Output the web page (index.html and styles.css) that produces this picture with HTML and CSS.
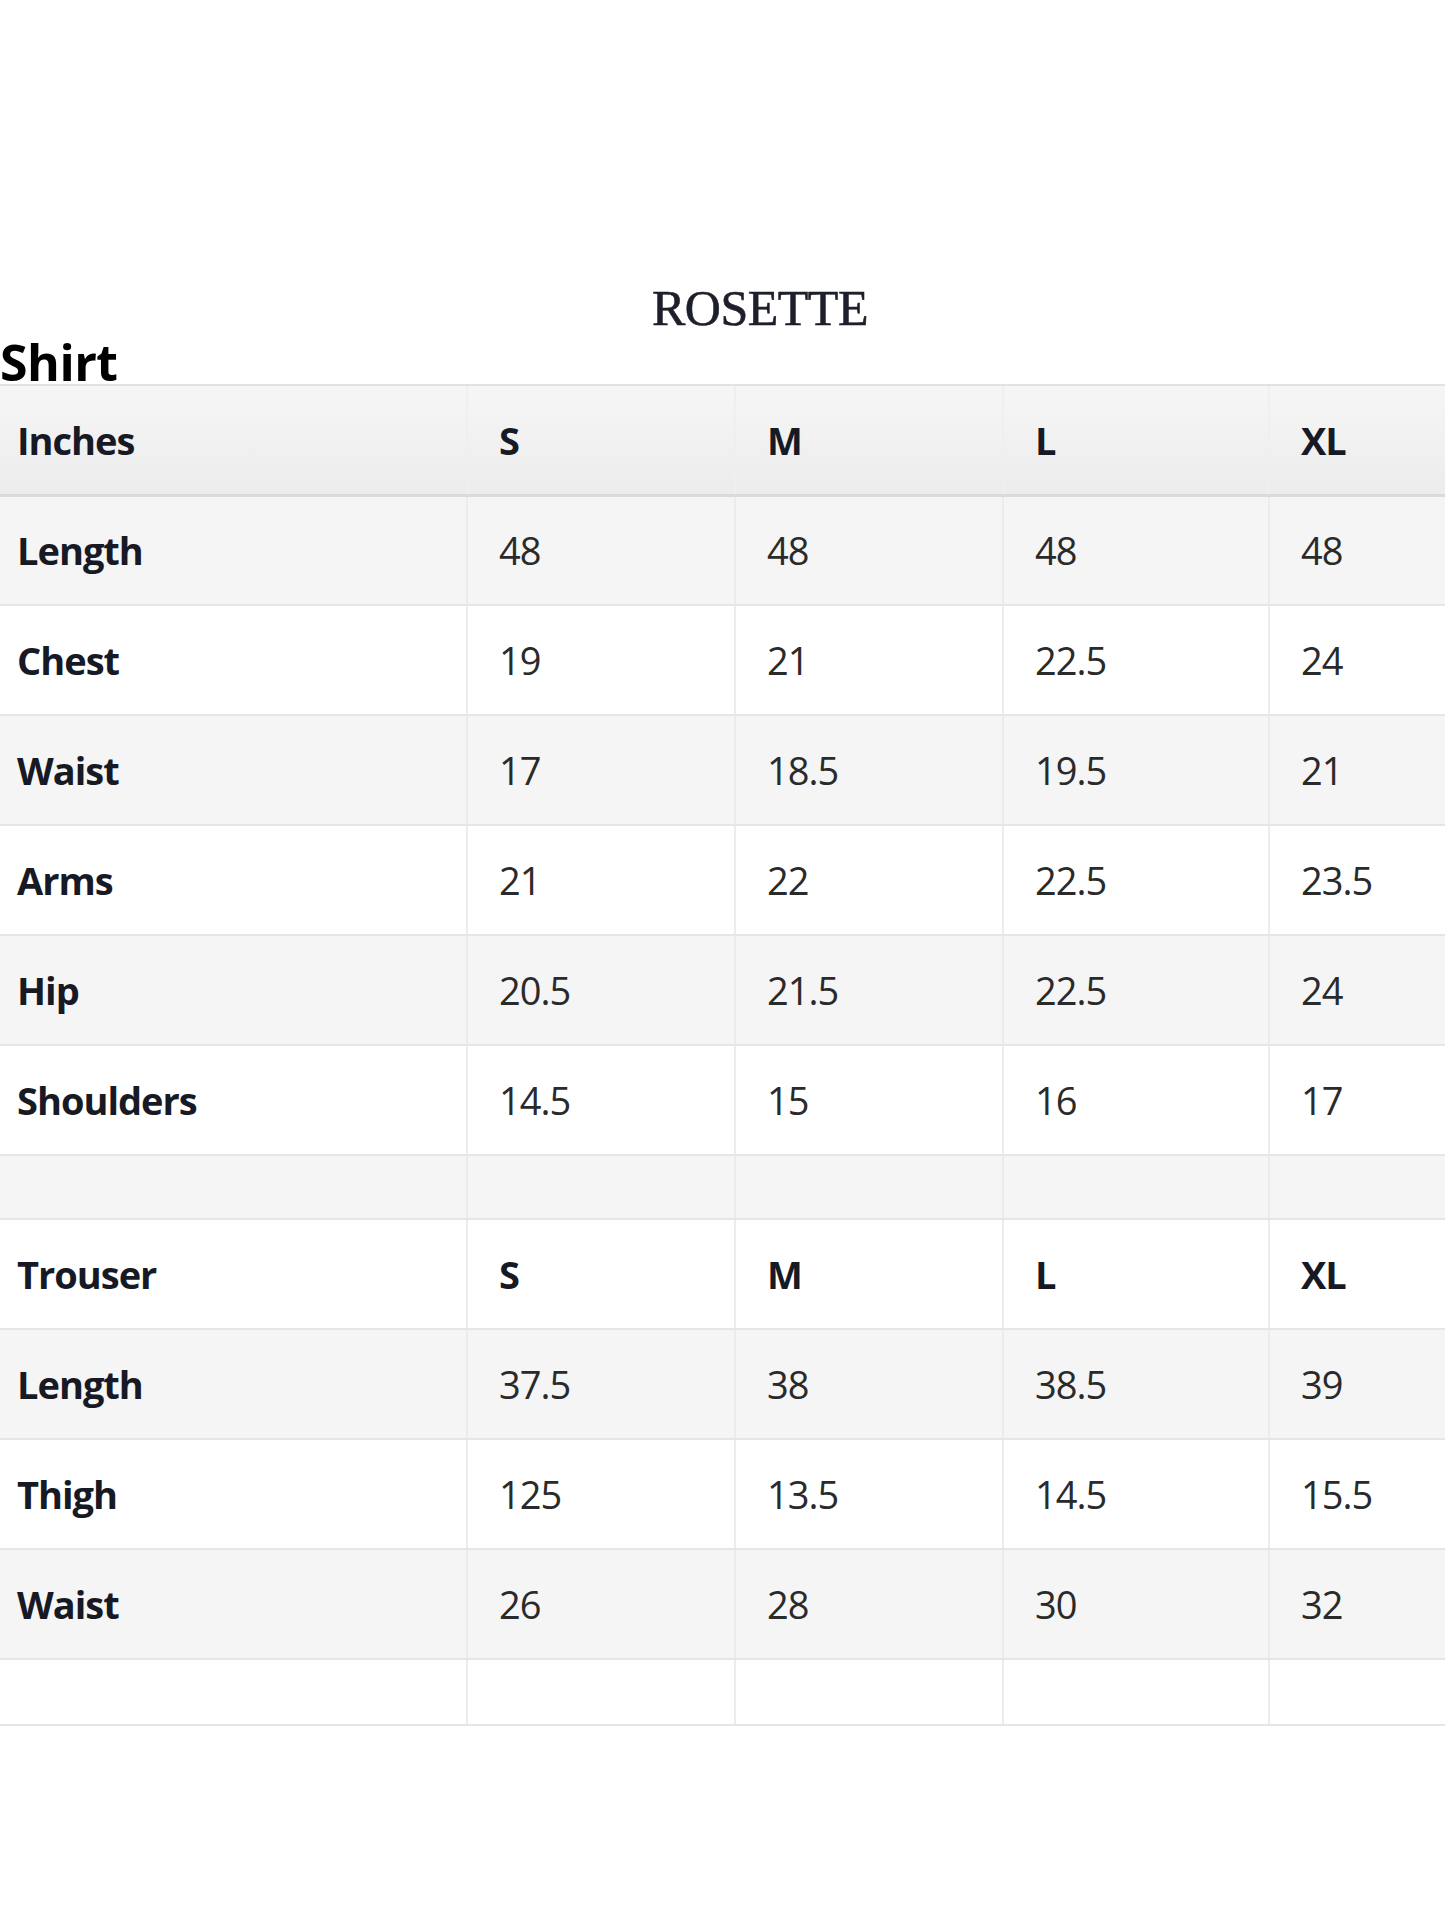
FILE: index.html
```html
<!DOCTYPE html>
<html lang="en">
<head>
<meta charset="utf-8">
<title>Rosette Size Chart</title>
<link rel="stylesheet" href="styles.css">
</head>
<body>
<div class="page">
  <h1 class="brand">ROSETTE</h1>
  <h2 class="section">Shirt</h2>
  <div class="table-wrap">
    <table class="chart">
      <colgroup>
        <col class="c-label"><col class="c-size"><col class="c-size"><col class="c-size-l"><col class="c-size">
      </colgroup>
      <thead>
        <tr class="head"><th>Inches</th><th>S</th><th>M</th><th>L</th><th>XL</th></tr>
      </thead>
      <tbody>
        <tr class="alt"><th>Length</th><td>48</td><td>48</td><td>48</td><td>48</td></tr>
        <tr><th>Chest</th><td>19</td><td>21</td><td>22.5</td><td>24</td></tr>
        <tr class="alt"><th>Waist</th><td>17</td><td>18.5</td><td>19.5</td><td>21</td></tr>
        <tr><th>Arms</th><td>21</td><td>22</td><td>22.5</td><td>23.5</td></tr>
        <tr class="alt"><th>Hip</th><td>20.5</td><td>21.5</td><td>22.5</td><td>24</td></tr>
        <tr><th>Shoulders</th><td>14.5</td><td>15</td><td>16</td><td>17</td></tr>
        <tr class="alt spacer"><th></th><td></td><td></td><td></td><td></td></tr>
        <tr><th>Trouser</th><th class="size">S</th><th class="size">M</th><th class="size">L</th><th class="size">XL</th></tr>
        <tr class="alt"><th>Length</th><td>37.5</td><td>38</td><td>38.5</td><td>39</td></tr>
        <tr><th>Thigh</th><td>125</td><td>13.5</td><td>14.5</td><td>15.5</td></tr>
        <tr class="alt"><th>Waist</th><td>26</td><td>28</td><td>30</td><td>32</td></tr>
        <tr class="spacer end"><th></th><td></td><td></td><td></td><td></td></tr>
      </tbody>
    </table>
  </div>
</div>
</body>
</html>
```
FILE: styles.css
```css
html, body {
  margin: 0;
  padding: 0;
  background: #ffffff;
  overflow: hidden;
}

.page {
  width: 1445px;
  padding-top: 278px;
  padding-bottom: 200px;
  overflow: hidden;
}

.brand {
  margin: 0 0 0 652px;
  font-family: "Liberation Serif", "DejaVu Serif", serif;
  font-weight: normal;
  font-size: 50px;
  line-height: 61px;
  color: #1d1f2b;
  letter-spacing: -0.5px;
  -webkit-text-stroke: 0.6px #1d1f2b;
}

.section {
  margin: 2px 0 0 0;
  font-family: "Open Sans", "Noto Sans", sans-serif;
  font-weight: 700;
  font-size: 50px;
  line-height: 43px;
  color: #000;
  letter-spacing: -0.5px;
}

.table-wrap {
  width: 1445px;
  overflow: hidden;
}

.chart {
  width: 1537px;
  border-collapse: collapse;
  table-layout: fixed;
  font-family: "Open Sans", "Noto Sans", sans-serif;
  font-size: 38px;
}

.c-label { width: 467px; }
.c-size { width: 268px; }
.c-size-l { width: 266px; }

.chart tr {
  height: 110px;
  background: #ffffff;
}

.chart tr.alt {
  background: #f5f5f5;
}

.chart tr.spacer {
  height: 64px;
}

.chart tr.spacer.end {
  height: 66px;
}

.chart th,
.chart td {
  padding: 0 0 0 31px;
  text-align: left;
  vertical-align: middle;
  border-top: 2px solid #e6e6e6;
  border-bottom: 2px solid #e6e6e6;
  border-left: 2px solid #ececec;
  letter-spacing: -1px;
}

.chart th {
  font-weight: 700;
  color: #171a24;
}

.chart td {
  font-weight: 400;
  color: #2a2a2a;
}

.chart tr > :first-child {
  padding-left: 17px;
  border-left: none;
}

.chart .head {
  background: linear-gradient(#f6f6f6, #ececec);
}

.chart .head th {
  border-top: 2px solid #e2e2e2;
  border-bottom: 3px solid #dadada;
  border-left: 2px solid #efefef;
}

.chart .head th:first-child {
  border-left: none;
}
```
